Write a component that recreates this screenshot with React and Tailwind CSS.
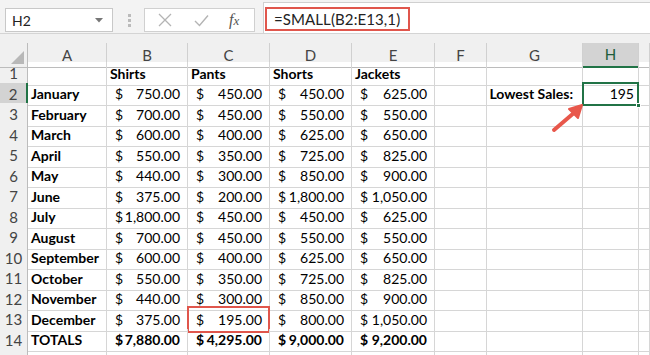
import React from "react";

const letters = ["A", "B", "C", "D", "E", "F", "G", "H", ""];

const data = [
  ["January", "750.00", "450.00", "450.00", "625.00"],
  ["February", "700.00", "450.00", "550.00", "550.00"],
  ["March", "600.00", "400.00", "625.00", "650.00"],
  ["April", "550.00", "350.00", "725.00", "825.00"],
  ["May", "440.00", "300.00", "850.00", "900.00"],
  ["June", "375.00", "200.00", "1,800.00", "1,050.00"],
  ["July", "1,800.00", "450.00", "450.00", "625.00"],
  ["August", "700.00", "450.00", "550.00", "550.00"],
  ["September", "600.00", "400.00", "625.00", "650.00"],
  ["October", "550.00", "350.00", "725.00", "825.00"],
  ["November", "440.00", "300.00", "850.00", "900.00"],
  ["December", "375.00", "195.00", "800.00", "1,050.00"],
];

const grid = "grid grid-cols-[28px_79px_81px_82px_82px_83px_52px_96px_56px_11px]";
const cell = "border-r border-b border-[#d6d6d6] h-full flex items-center overflow-visible whitespace-nowrap";

function Money({ v, bold, red }) {
  return (
    <div className={`${cell} relative justify-between pl-[8px] pr-[7px] ${bold ? "font-bold" : ""}`}>
      <span>$</span>
      <span>{v}</span>
      {red && (
        <div className="absolute left-[-1px] top-[-2px] right-[-1px] bottom-[-2px] border-2 border-[#e0564c] pointer-events-none" />
      )}
    </div>
  );
}

function RowNum({ n, sel }) {
  return (
    <div
      className={`h-full flex items-center justify-center border-b border-[#d6d6d6] text-[15px] text-[#444] ${
        sel ? "bg-[#d3d3d3] border-r-2 border-r-[#217346]" : "bg-[#f0f0f0] border-r border-r-[#bcbcbc]"
      }`}
    >
      {n}
    </div>
  );
}

function Empty() {
  return <div className={cell} />;
}

export default function App() {
  return (
    <div
      className="w-[650px] h-[355px] overflow-hidden bg-white text-black relative"
      style={{ fontFamily: "Lato, 'Open Sans', sans-serif" }}
    >
      {/* top formula bar */}
      <div className="h-[43px] bg-[#f0f0f0] flex items-start relative">
        <div className="absolute left-0 top-0 right-0 h-[34px] bg-[#f3f3f3] border-b border-[#d4d4d4]" />
        <div className="relative mt-[8px] ml-[5px] w-[108px] h-[24px] bg-white border border-[#c8c8c8] flex items-center pl-[6px] text-[14px] text-[#222]">
          H2
          <svg className="absolute right-[9px] top-[9px]" width="8" height="5" viewBox="0 0 8 5">
            <path d="M0 0 L8 0 L4 4.5 Z" fill="#777" />
          </svg>
        </div>
        <div className="relative ml-[15px] mt-[14px] flex flex-col gap-[2px]">
          <div className="w-[3px] h-[3px] bg-[#bbb]" />
          <div className="w-[3px] h-[3px] bg-[#bbb]" />
          <div className="w-[3px] h-[3px] bg-[#bbb]" />
        </div>
        <div className="relative ml-[13px] mt-[8px] w-[111px] h-[24px] bg-white border border-[#d0d0d0] flex items-center">
          <svg className="ml-[13px]" width="14" height="14" viewBox="0 0 14 14">
            <path d="M1 1 L13 13 M13 1 L1 13" stroke="#b4b4b4" strokeWidth="1.3" />
          </svg>
          <svg className="ml-[22px]" width="15" height="13" viewBox="0 0 15 13">
            <path d="M1 7 L5.5 11.5 L14 1.5" stroke="#b4b4b4" strokeWidth="1.4" fill="none" />
          </svg>
          <span
            className="ml-[20px] text-[16px] italic text-[#555]"
            style={{ fontFamily: "'Liberation Serif', serif" }}
          >
            f<span className="text-[13px]">x</span>
          </span>
        </div>
        <div className="relative ml-[8px] mt-[2px] flex-1 h-[31px] bg-white border-l border-t border-[#d0d0d0] flex items-start">
          <div className="ml-[1px] mt-[4px] w-[145px] h-[24px] border-2 border-[#e0564c] flex items-center pl-[7px] text-[15px] text-[#222] tracking-[0.1px]">
            =SMALL(B2:E13,1)
          </div>
        </div>
      </div>

      {/* column headers */}
      <div className={`${grid} h-[19px] bg-[#f0f0f0] text-[15px] text-[#444]`}>
        <div className="relative border-r border-b border-[#bcbcbc] h-full">
          <svg className="absolute right-[3px] bottom-[3px]" width="13" height="13" viewBox="0 0 13 13">
            <path d="M13 0 L13 13 L0 13 Z" fill="#b8b8b8" />
          </svg>
        </div>
        {letters.map((l, idx) => (
          <div
            key={idx}
            className={`h-full flex items-center justify-center border-r border-[#d0d0d0] ${
              l === "H" ? "bg-[#d3d3d3] border-b-2 border-b-[#217346] text-[#1e5e3a]" : "border-b border-b-[#bcbcbc]"
            }`}
          >
            {l}
          </div>
        ))}
        <div className="h-full border-b border-[#bcbcbc]" />
      </div>

      {/* rows */}
      <div className="text-[14px]">
        {/* row 1 */}
        <div className={`${grid} h-[20.5px]`}>
          <RowNum n={1} />
          <Empty />
          {["Shirts", "Pants", "Shorts", "Jackets"].map((t) => (
            <div key={t} className={`${cell} font-bold pl-[3px]`}>
              {t}
            </div>
          ))}
          <Empty />
          <Empty />
          <Empty />
          <Empty />
          <Empty />
        </div>

        {data.map((r, i) => (
          <div key={r[0]} className={`${grid} h-[20.5px]`}>
            <RowNum n={i + 2} sel={i === 0} />
            <div className={`${cell} font-bold pl-[3px]`}>{r[0]}</div>
            <Money v={r[1]} />
            <Money v={r[2]} red={i === 11} />
            <Money v={r[3]} />
            <Money v={r[4]} />
            <Empty />
            {i === 0 ? (
              <div className={`${cell} justify-end pr-[9px] font-bold`}>Lowest Sales:</div>
            ) : (
              <Empty />
            )}
            {i === 0 ? (
              <div className={`${cell} relative justify-end pr-[4px]`}>
                195
                <div className="absolute left-[-1px] top-[-1px] right-[-1px] bottom-[-1px] border-2 border-[#217346]" />
                <div className="absolute right-[-3px] bottom-[-3px] w-[5px] h-[5px] bg-[#217346] border border-white" />
              </div>
            ) : (
              <Empty />
            )}
            <Empty />
            <Empty />
          </div>
        ))}

        {/* totals */}
        <div className={`${grid} h-[20.5px]`}>
          <RowNum n={14} />
          <div className={`${cell} font-bold pl-[3px]`}>TOTALS</div>
          <Money v="7,880.00" bold />
          <Money v="4,295.00" bold />
          <Money v="9,000.00" bold />
          <Money v="9,200.00" bold />
          <Empty />
          <Empty />
          <Empty />
          <Empty />
          <Empty />
        </div>
        <div className={`${grid} h-[20.5px]`}>
          <RowNum n="" />
          <Empty />
          <Empty />
          <Empty />
          <Empty />
          <Empty />
          <Empty />
          <Empty />
          <Empty />
          <Empty />
          <Empty />
        </div>
      </div>

      {/* arrow */}
      <svg className="absolute left-[548px] top-[100px]" width="40" height="36" viewBox="0 0 40 36">
        <path d="M6 30 L27 12" stroke="#e8574b" strokeWidth="4" strokeLinecap="round" />
        <path d="M34 5 L21 9 L30 18 Z" fill="#e8574b" stroke="#e8574b" strokeWidth="2" strokeLinejoin="round" />
      </svg>
    </div>
  );
}
